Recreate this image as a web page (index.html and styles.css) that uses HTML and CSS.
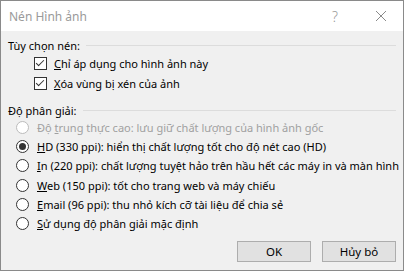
FILE: index.html
```html
<!DOCTYPE html>
<html lang="vi">
<head>
    <meta charset="UTF-8">
    <title>Nén Hình ảnh</title>
    <link rel="stylesheet" href="styles.css">
</head>
<body>
    <div class="dialogo">
        <div class="barra-titulo">
            <span class="titulo">Nén Hình ảnh</span>
            <span class="ayuda">?</span>
            <svg class="cerrar" width="12" height="12" viewBox="0 0 12 12">
                <path d="M1 1 L11 11 M11 1 L1 11" stroke="#8a8a8a" stroke-width="1" fill="none"/>
            </svg>
        </div>

        <div class="contenido">
            <div class="grupo">Tùy chọn nén:</div>
            <div class="opciones-check">
                <label class="fila"><span class="caja"></span><span><u>C</u>hỉ áp dụng cho hình ảnh này</span></label>
                <label class="fila"><span class="caja"></span><span><u>X</u>óa vùng bị xén của ảnh</span></label>
            </div>

            <div class="grupo grupo-2">Độ phân giải:</div>
            <div class="opciones-radio">
                <label class="fila deshabilitado"><span class="radio"></span><span>Độ <u>t</u>rung thực cao: lưu giữ chất lượng của hình ảnh gốc</span></label>
                <label class="fila"><span class="radio marcado"></span><span><u>H</u>D (330 ppi): hiển thị chất lượng tốt cho độ nét cao (HD)</span></label>
                <label class="fila"><span class="radio"></span><span><u>I</u>n (220 ppi): chất lượng tuyệt hảo trên hầu hết các máy in và màn hình</span></label>
                <label class="fila"><span class="radio"></span><span><u>W</u>eb (150 ppi): tốt cho trang web và máy chiếu</span></label>
                <label class="fila"><span class="radio"></span><span><u>E</u>mail (96 ppi): thu nhỏ kích cỡ tài liệu để chia sẻ</span></label>
                <label class="fila"><span class="radio"></span><span><u>S</u>ử dụng độ phân giải mặc định</span></label>
            </div>

            <div class="acciones">
                <button class="btn">OK</button>
                <button class="btn">Hủy bỏ</button>
            </div>
        </div>
    </div>
</body>
</html>
```

FILE: styles.css
```css
:root {
    --fondo: #f0f0f0;
    --borde: #8a8a8a;
    --linea: #dcdcdc;
    --texto: #000;
    --gris: #a0a0a0;
}

* {
    box-sizing: border-box;
}

body {
    margin: 0;
    font-family: "Noto Sans", "Open Sans", sans-serif;
    font-size: 11px;
    color: var(--texto);
}

.dialogo {
    width: 404px;
    height: 271px;
    border: 1px solid var(--borde);
    background-color: var(--fondo);
    overflow: hidden;
}

.barra-titulo {
    height: 30px;
    background-color: #fff;
    display: flex;
    align-items: center;
    padding-left: 8px;
}

    .barra-titulo .titulo {
        flex: 1;
        color: #9a9a9a;
        font-size: 12px;
    }

    .barra-titulo .ayuda {
        color: #9a9a9a;
        font-size: 14px;
        font-weight: 300;
        margin-right: 37px;
    }

    .barra-titulo .cerrar {
        margin-right: 16px;
    }

.contenido {
    padding: 0 7px 0 7px;
}

.grupo {
    display: flex;
    align-items: center;
    height: 14px;
    margin-top: 7px;
    gap: 6px;
}

    .grupo::after {
        content: "";
        flex: 1;
        border-top: 1px solid var(--linea);
    }

.grupo-2 {
    margin-top: 10px;
}

.opciones-check {
    margin-top: 1px;
    padding-left: 26px;
}

.opciones-radio {
    margin-top: 1px;
    padding-left: 8px;
}

.fila {
    display: flex;
    align-items: center;
    white-space: nowrap;
}

.opciones-check .fila {
    height: 20px;
    gap: 7px;
}

.opciones-radio .fila {
    height: 19.2px;
    gap: 8px;
}

.caja {
    width: 13px;
    height: 13px;
    border: 1px solid #333;
    background-color: #fff;
    position: relative;
    flex: none;
}

    .caja::after {
        content: "";
        position: absolute;
        left: 3px;
        top: 0px;
        width: 3px;
        height: 7px;
        border-right: 1px solid #333;
        border-bottom: 1px solid #333;
        transform: rotate(45deg);
    }

.radio {
    width: 13px;
    height: 13px;
    border: 1px solid #333;
    border-radius: 50%;
    background-color: #fff;
    flex: none;
    display: flex;
    align-items: center;
    justify-content: center;
}

.marcado::after {
    content: "";
    width: 7px;
    height: 7px;
    border-radius: 50%;
    background-color: #333;
}

.deshabilitado {
    color: var(--gris);
}

    .deshabilitado .radio {
        border-color: #bcbcbc;
    }

.acciones {
    display: flex;
    justify-content: flex-end;
    gap: 11px;
    margin-top: 8px;
}

.btn {
    width: 74px;
    height: 21px;
    background-color: #e1e1e1;
    border: 1px solid #adadad;
    font-family: inherit;
    font-size: 11.5px;
    color: var(--texto);
    padding: 0;
}
```
